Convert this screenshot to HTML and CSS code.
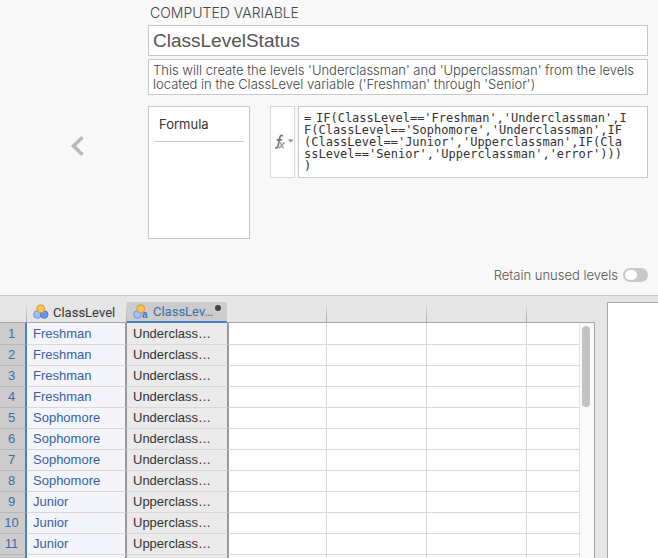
FILE: index.html
```html
<!DOCTYPE html>
<html lang="en">
<head>
<meta charset="utf-8">
<title>Computed variable</title>
<link rel="stylesheet" href="styles.css">
</head>
<body>
<section class="editor">
  <button class="back" aria-label="Previous variable"><svg width="14" height="20" viewBox="0 0 14 20"><path d="M12.500 1.300 3.500 10l9 8.700" fill="none" stroke="#b9b9b9" stroke-width="3.600"/></svg></button>
  <div class="form">
    <h1 class="kind">COMPUTED VARIABLE</h1>
    <input class="name" aria-label="Variable name" value="ClassLevelStatus">
    <textarea class="description" aria-label="Description" rows="2" spellcheck="false">This will create the levels 'Underclassman' and 'Upperclassman' from the levels located in the ClassLevel variable ('Freshman' through 'Senior')</textarea>
    <div class="compute">
      <div class="methods"><div class="method">Formula</div></div>
      <button class="fx" aria-label="Functions"><svg width="21" height="20" viewBox="0 0 21 20"><path d="M9.800 4.200C8.500 2.800 7.200 3.500 6.700 5.800L5.200 13.500C4.800 15.800 3.600 16.500 2.200 15.500M3.500 7.800h5.500" fill="none" stroke="#777" stroke-width="1.700"/><path d="M6.800 10.500c2 0 1.700 5.500 4 5.500M11.500 10.500 6 16.200" fill="none" stroke="#999" stroke-width="1.400"/><path d="M15 7.500h5.500L17.800 10.500z" fill="#888"/></svg></button>
      <div class="entry">
        <span class="equals">=</span>
        <textarea class="formula" aria-label="Formula" spellcheck="false">IF(ClassLevel=='Freshman','Underclassman',IF(ClassLevel=='Sophomore','Underclassman',IF(ClassLevel=='Junior','Upperclassman',IF(ClassLevel=='Senior','Upperclassman','error'))))</textarea>
      </div>
    </div>
    <label class="retain">Retain unused levels <input type="checkbox" class="switch"></label>
  </div>
</section>
<main class="workspace">
  <div class="sheet">
    <table class="grid">
      <colgroup><col class="c-num"><col class="c-data"><col class="c-data"><col class="c-data"><col class="c-data"><col class="c-data"><col></colgroup>
      <thead>
        <tr>
          <th></th>
          <th><div class="head"><svg width="16" height="16" viewBox="0 0 16 16"><circle cx="4.500" cy="10.500" r="3.800" fill="#a4c0f7" stroke="#6c91dc"/><circle cx="11.200" cy="10.500" r="3.800" fill="#6797ec" stroke="#4a7ad2"/><circle cx="7.800" cy="4.800" r="4" fill="#fac05a" stroke="#d99b35"/></svg><span>ClassLevel</span></div></th>
          <th class="active"><div class="head"><svg width="16" height="16" viewBox="0 0 16 16"><circle cx="4.500" cy="10.500" r="3.800" fill="#a4c0f7" stroke="#6c91dc"/><circle cx="7.800" cy="4.800" r="4" fill="#fac05a" stroke="#d99b35"/><text x="9" y="14" class="tag">a</text></svg><span>ClassLev…</span></div><i class="dot"></i></th>
          <th></th><th></th><th></th><th></th>
        </tr>
      </thead>
      <tbody>
        <tr><th>1</th><td>Freshman</td><td>Underclass…</td><td></td><td></td><td></td><td></td></tr>
        <tr><th>2</th><td>Freshman</td><td>Underclass…</td><td></td><td></td><td></td><td></td></tr>
        <tr><th>3</th><td>Freshman</td><td>Underclass…</td><td></td><td></td><td></td><td></td></tr>
        <tr><th>4</th><td>Freshman</td><td>Underclass…</td><td></td><td></td><td></td><td></td></tr>
        <tr><th>5</th><td>Sophomore</td><td>Underclass…</td><td></td><td></td><td></td><td></td></tr>
        <tr><th>6</th><td>Sophomore</td><td>Underclass…</td><td></td><td></td><td></td><td></td></tr>
        <tr><th>7</th><td>Sophomore</td><td>Underclass…</td><td></td><td></td><td></td><td></td></tr>
        <tr><th>8</th><td>Sophomore</td><td>Underclass…</td><td></td><td></td><td></td><td></td></tr>
        <tr><th>9</th><td>Junior</td><td>Upperclass…</td><td></td><td></td><td></td><td></td></tr>
        <tr><th>10</th><td>Junior</td><td>Upperclass…</td><td></td><td></td><td></td><td></td></tr>
        <tr><th>11</th><td>Junior</td><td>Upperclass…</td><td></td><td></td><td></td><td></td></tr>
        <tr><th></th><td></td><td></td><td></td><td></td><td></td><td></td></tr>
      </tbody>
    </table>
    <div class="track"><div class="thumb"></div></div>
  </div>
  <aside class="results"></aside>
</main>
</body>
</html>
```
FILE: styles.css
```css
* { box-sizing: border-box; }
body {
  margin: 0;
  height: 100vh;
  display: flex;
  flex-direction: column;
  overflow: hidden;
  background: #e5e5e5;
  font-family: Inter, sans-serif;
  font-size: 13px;
  color: #333;
}
button { padding: 0; border: 0; background: none; }
svg { display: block; }

.editor {
  display: flex;
  padding: 4px 10px 12px 0;
  background: #f8f8f8;
  border-bottom: 1px solid #c8c8c8;
}
.back {
  width: 148px;
  flex: none;
  padding: 5px 0 0 70px;
}
.form {
  flex: 1;
  min-width: 0;
  display: flex;
  flex-direction: column;
}
.kind {
  margin: 0 0 4px;
  padding-left: 2px;
  font-size: 14px;
  line-height: 17px;
  font-weight: 300;
  color: #444;
}
.name, .description, .entry, .methods, .fx {
  border: 1px solid #c8c8c8;
  border-radius: 0;
  background: #fff;
}
.name {
  height: 31px;
  margin: 0 0 3px;
  padding: 0 4px;
  font: 19px "Liberation Sans", sans-serif;
  color: #555;
}
.description {
  height: 36px;
  margin: 0 0 11px;
  padding: 3px 4px;
  resize: none;
  overflow: hidden;
  font: 300 13px/14px Inter, sans-serif;
  color: #444;
}
.compute {
  display: flex;
  align-items: flex-start;
  height: 133px;
}
.methods {
  width: 102px;
  height: 133px;
  margin-right: 20px;
  padding: 0 5px;
}
.method {
  height: 35px;
  padding-left: 5px;
  line-height: 34px;
  border-bottom: 1px solid #c8c8c8;
}
.fx {
  width: 25px;
  height: 72px;
  margin-right: 3px;
  padding-left: 2px;
  border-color: #d8d8d8;
}
.entry {
  position: relative;
  flex: 1;
  min-width: 0;
  height: 72px;
  font: 12px/12px "DejaVu Sans Mono", monospace;
}
.equals {
  position: absolute;
  top: 5px;
  left: 5px;
}
.formula {
  display: block;
  width: 100%;
  height: 100%;
  margin: 0;
  padding: 5px 19px 5px 5px;
  border: 0;
  background: none;
  resize: none;
  overflow: hidden;
  text-indent: 12px;
  word-break: break-all;
  line-break: anywhere;
  font: inherit;
  color: #333;
}
.retain {
  display: flex;
  align-items: center;
  justify-content: flex-end;
  gap: 5px;
  margin-top: 28px;
  line-height: 16px;
  font-weight: 300;
  color: #555;
}
.switch {
  appearance: none;
  width: 25px;
  height: 14px;
  margin: 0;
  padding: 2px;
  border-radius: 7px;
  background: #c8c8c8;
}
.switch::before {
  content: "";
  display: block;
  width: 12px;
  height: 10px;
  border-radius: 5px;
  background: #fff;
}

.workspace {
  flex: 1;
  min-height: 0;
  display: flex;
  padding-top: 6px;
}
.sheet {
  flex: 1;
  min-width: 0;
  display: flex;
  overflow: hidden;
}
.grid {
  flex: 1;
  min-width: 0;
  align-self: flex-start;
  table-layout: fixed;
  border-collapse: separate;
  border-spacing: 0;
  font-family: "Liberation Sans", sans-serif;
}
.c-num { width: 27px; }
.c-data { width: 100px; }
.grid th, .grid td {
  padding: 0;
  font-weight: 400;
  text-align: left;
  white-space: nowrap;
}
thead th {
  position: relative;
  height: 21px;
  border-bottom: 1px solid #a6a6a6;
  background: linear-gradient(#e5e5e5, #aaa) right / 1px 100% no-repeat;
}
thead th:last-child { background: none; }
thead .active {
  background: #ccc;
  border-bottom: 2px solid #4a80c4;
  color: #3e6da9;
}
.head {
  display: flex;
  align-items: center;
  gap: 4px;
  padding-left: 6px;
  font-family: Roboto, sans-serif;
}
.tag { font: 700 10px "Liberation Sans", sans-serif; fill: #4a6fc4; }
.dot {
  position: absolute;
  top: 3px;
  right: 6px;
  width: 6px;
  height: 6px;
  border-radius: 50%;
  background: #444;
}
tbody th, tbody td {
  height: 21px;
  line-height: 20px;
  border-right: 1px solid #d8d8d8;
  border-bottom: 1px solid #d8d8d8;
  background: #fff;
}
tbody tr:first-child > * { height: 22px; }
tbody th:first-child {
  padding-right: 2px;
  text-align: center;
  color: #3e6da9;
  background: #ccc;
  border-right: 2px solid #4a80c4;
  border-bottom-color: #b8b8b8;
}
tbody td:nth-child(2) {
  padding-left: 6px;
  color: #3560a0;
  background: #f3f5fb;
  border-right: 2px solid #999;
}
tbody td:nth-child(3) {
  padding-left: 6px;
  background: #eaeaea;
  border-right: 0;
}
tbody td:nth-child(4) { border-left: 2px solid #999; }
tbody td:last-child { border-right: 0; }
.track {
  width: 16px;
  margin-top: 20px;
  padding: 3px 3px 0;
  border: solid #a6a6a6;
  border-width: 1px 1px 0 0;
  background: #fafafa;
  box-shadow: inset 1px 0 #e2e2e2;
}
.thumb {
  width: 8px;
  height: 81px;
  border-radius: 4px;
  background: #c2c2c2;
}
.results {
  width: 51px;
  margin-left: 12px;
  border: solid #a6a6a6;
  border-width: 1px 0 0 1px;
  background: #fff;
}
```
